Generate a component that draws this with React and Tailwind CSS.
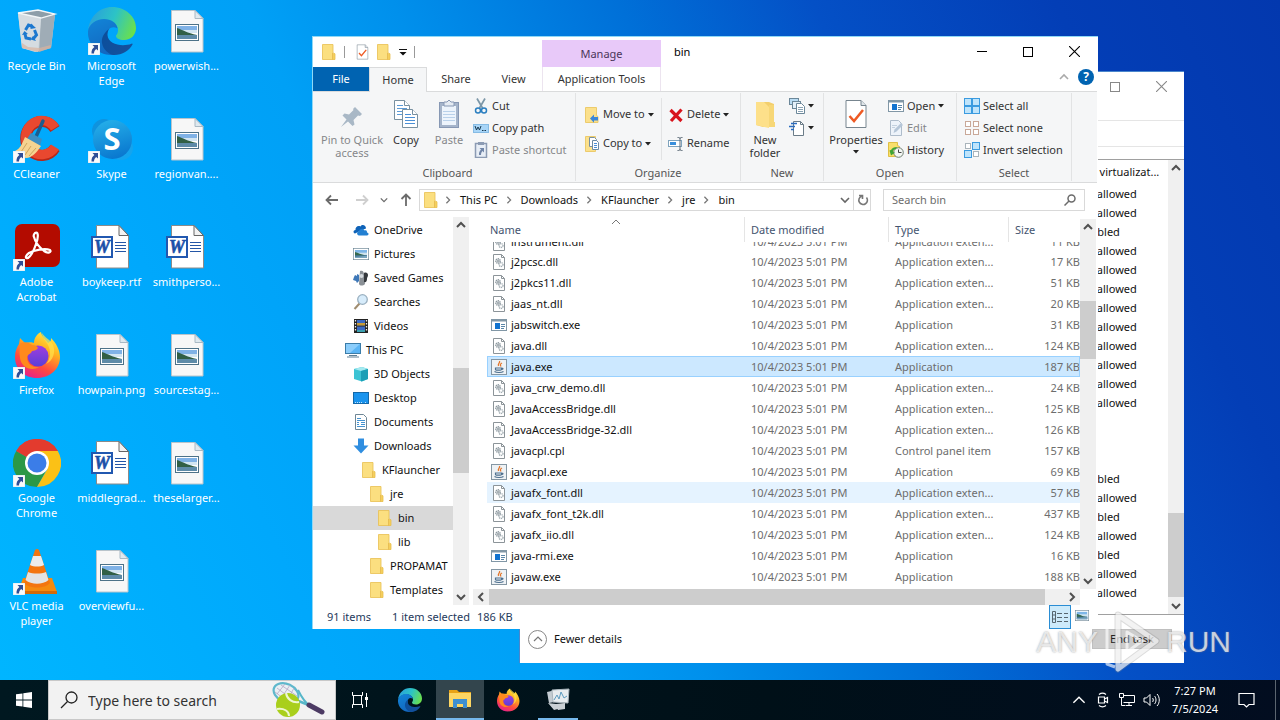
import { Fragment } from 'react';

/* ---------- Shared glyphs ---------- */

function Chevron({ dir = 'down', size = 'size-[10px]', className = '', width = 1.6 }) {
  const paths = {
    down: 'M1 3l4 4 4-4',
    up: 'M1 7l4-4 4 4',
    left: 'M7 1L3 5l4 4',
    right: 'M3 1l4 4-4 4',
  };
  return (
    <svg viewBox="0 0 10 10" className={`shrink-0 ${size} ${className}`} fill="none" stroke="currentColor" strokeWidth={width}>
      <path d={paths[dir]} />
    </svg>
  );
}

function Caret() {
  return (
    <svg viewBox="0 0 6 4" className="h-1 w-[6px] shrink-0" fill="#222">
      <path d="M0 0h6L3 3.5z" />
    </svg>
  );
}

function FolderIcon({ className = 'size-4' }) {
  return (
    <svg viewBox="0 0 16 16" className={`shrink-0 ${className}`}>
      <path d="M1.5.5h10.5v9l2 .5v5.5H1.5z" fill="#fbdf80" />
      <path d="M12 9.500h2v6h-2z" fill="#f5cf5c" />
      <path d="M1.500 .5h10.500v8.500l2 .8v5.700H1.500z" fill="none" stroke="#e8bf50" strokeWidth=".8" />
      <path d="M11.500 9v6.500" stroke="#e0b040" strokeWidth=".7" />
    </svg>
  );
}

function LargeFolderIcon() {
  return (
    <svg viewBox="0 0 22 28" className="h-7 w-[22px]">
      <path d="M2 1h13l5 2v18l1 1v4H9L2 24z" fill="#f3cf6d" />
      <path d="M2 1h8l5 5v21L2 24z" fill="#fde08a" />
      <path d="M15 4h5v17h1v5h-6z" fill="#f7d777" />
    </svg>
  );
}

function LandscapeIcon({ className = 'h-3 w-4' }) {
  return (
    <svg viewBox="0 0 24 18" className={`shrink-0 ${className}`} preserveAspectRatio="none">
      <rect x=".5" y=".5" width="23" height="17" fill="#fff" stroke="#6a8494" />
      <path d="M3 3h18v12H3z" fill="#7db6e8" />
      <path d="M3 7h18v4H3z" fill="#cfe3ee" />
      <path d="M3 6c5 1 9 4 15 5l3 .5H3z" fill="#35694e" />
      <path d="M3 11h18v4H3z" fill="#3c6f8f" />
      <path d="M3 13c8 0 12-1 18-1v3H3z" fill="#79a5bd" />
    </svg>
  );
}

function ShortcutArrow() {
  return (
    <svg viewBox="0 0 12 12" className="absolute bottom-0 left-0 size-3">
      <rect width="12" height="12" fill="#fafafa" stroke="#b9d7ea" strokeWidth=".5" />
      <path d="M4.500 2H10v5.500L8.200 5.900C6.700 7 6 8.400 6 10.500H3.500C3.300 7.500 4.400 5.300 6.400 4z" fill="#2f4e96" />
    </svg>
  );
}

/* ---------- Desktop icons ---------- */

function RecycleIcon() {
  return (
    <svg viewBox="0 0 48 48" className="size-12">
      <path d="M5 6l20-3 17 4-4 34-16 4-13-4z" fill="#c9d2d8" />
      <path d="M5 6l20-3 17 4-14 4z" fill="#8d9ea9" />
      <path d="M28 11l14-4-4 34-12 4z" fill="#9facb6" />
      <path d="M5 6l23 5-3 34-16-4z" fill="#d5dce1" />
      <path d="M5 6l20-3 17 4-14 4z" fill="none" stroke="#f2f6f8" strokeWidth="1.300" />
      <path d="M9 36l6 4 11 1 12-3-.5 3L25 45 9 41z" fill="#d9b3a0" opacity=".7" />
      <g fill="none" stroke="#1c78cf" strokeWidth="3">
        <path d="M12.500 23l3-5 4 1.500" />
        <path d="M21.500 23l2 5-3 3.500" />
        <path d="M18 32l-5-1-1-4" />
      </g>
      <path d="M18 16.500l5 4.500-5.500 1zM23 34l-5.500-1.500L20 29zM9 28l2.500-4 3.500 3z" fill="#1c78cf" />
    </svg>
  );
}

function EdgeIcon({ className = 'size-12' }) {
  return (
    <svg viewBox="0 0 48 48" className={className}>
      <defs>
        <linearGradient id="edgeTop" x1="0" y1=".3" x2="1" y2=".6">
          <stop offset="0" stopColor="#2a9fdc" />
          <stop offset=".5" stopColor="#2cc3c6" />
          <stop offset="1" stopColor="#6be04c" />
        </linearGradient>
        <linearGradient id="edgeLeft" x1="0" y1="0" x2=".4" y2="1">
          <stop offset="0" stopColor="#1285d8" />
          <stop offset="1" stopColor="#1268c0" />
        </linearGradient>
        <linearGradient id="edgeBottom" x1="0" y1=".4" x2="1" y2=".6">
          <stop offset="0" stopColor="#0c4f9c" />
          <stop offset="1" stopColor="#16509c" />
        </linearGradient>
      </defs>
      <path d="M0 23C2 9 12 0 24 0c14 0 24 10 24 21 0 7-5 12-12 12-5 0-8-2-8-4 0-1 2-2 2-6 0-6-6-10-13-10C9 13 2 17 0 23z" fill="url(#edgeTop)" />
      <path d="M0 24c1-7 8-12 16-12 7 0 13 4 13.500 9.500C24 18 19 22 19 28c0 9 7 16 15 17-4 2-8 3-11 3C9 48-1 36 0 24z" fill="url(#edgeLeft)" />
      <path d="M21 22c-4 3-8 8-7 14 1 7 7 11 11 11.900 9 .4 16-4 19.500-10.400.4-.8-.3-1.200-1-.8C35 40 20 38 19.500 28c0-2.500.5-4.500 1.500-6z" fill="url(#edgeBottom)" />
    </svg>
  );
}

function CCleanerIcon() {
  return (
    <svg viewBox="0 0 48 48" className="size-12">
      <path d="M42 14A16 17 0 1 0 42 33" fill="none" stroke="#b92717" strokeWidth="11" />
      <path d="M42 13A16 17 0 1 0 42 32" fill="none" stroke="#e9482f" strokeWidth="9.500" />
      <path d="M30 6L22 24" stroke="#1c5c8e" strokeWidth="3.500" strokeLinecap="round" />
      <path d="M18 18l11 6-2 7-13-7z" fill="#3b8fc4" />
      <path d="M12 22l16 9c-4 6-9 12-15 12-5-1-9-3-11-7 5-2 7-7 10-14z" fill="#f5d491" />
      <path d="M14 28l-6 9M18 31l-6 9M23 33l-7 8" stroke="#cfa35c" strokeWidth="1" />
    </svg>
  );
}

function SkypeIcon() {
  return (
    <svg viewBox="0 0 48 48" className="size-12">
      <defs>
        <linearGradient id="skypeFace" x1=".2" y1="0" x2=".5" y2="1">
          <stop offset="0" stopColor="#25b0ea" />
          <stop offset="1" stopColor="#0a78cf" />
        </linearGradient>
      </defs>
      <circle cx="16" cy="16" r="12" fill="#0f93de" />
      <circle cx="33" cy="33" r="12" fill="#14a4ee" />
      <circle cx="24.500" cy="24.500" r="19.500" fill="url(#skypeFace)" />
      <text x="24" y="35" textAnchor="middle" fontSize="31" fontWeight="700" fill="#fff" fontFamily="Open Sans, sans-serif">S</text>
    </svg>
  );
}

function AcrobatIcon() {
  return (
    <svg viewBox="0 0 48 48" className="size-12">
      <rect x="2" y="1" width="45" height="43" rx="7" fill="#b30b00" />
      <path
        d="M22 10c3-2 4 3 1 11-2 6-5 12-8 14-3 1-3-2 1-5 5-3 16-5 21-3 2 2-2 4-6 1-5-4-9-10-10-14-1-2 0-3 1-4z"
        fill="none" stroke="#fff" strokeWidth="2.200"
      />
    </svg>
  );
}

function FirefoxIcon({ className = 'size-12' }) {
  return (
    <svg viewBox="0 0 48 48" className={className}>
      <defs>
        <linearGradient id="foxBody" x1=".8" y1="0" x2=".3" y2="1">
          <stop offset="0" stopColor="#fff04a" />
          <stop offset=".35" stopColor="#ffb21f" />
          <stop offset=".7" stopColor="#ff4b3e" />
          <stop offset="1" stopColor="#e5208c" />
        </linearGradient>
        <linearGradient id="foxGlobe" x1=".5" y1="0" x2=".5" y2="1">
          <stop offset="0" stopColor="#a03de0" />
          <stop offset="1" stopColor="#5a3fd6" />
        </linearGradient>
      </defs>
      <path d="M28 1c1 5 4 7 7 11 3-1 3-3 3-5 5 5 9 12 9 19 0 12-10 21-23 21S2 38 2 26c0-6 2-10 4-13l1-6 5 5c3-1 7-1 9 0 0-5 3-9 7-11z" fill="url(#foxBody)" />
      <circle cx="25" cy="25" r="10.500" fill="url(#foxGlobe)" />
      <path d="M7 13c3-3 9-2 12 1 3 0 5 1 6 3-1 2-4 3-6 3-1 3-4 3-5 6 0 7 6 11 12 10-8 5-18 0-19-9-1-5 0-10 0-14z" fill="#ff8a1c" />
      <path d="M29 2c0 5 4 8 6 12 3 6 3 14-2 19 7-3 10-12 7-19-2-5-8-7-11-12z" fill="#ffe04a" opacity=".75" />
    </svg>
  );
}

function ChromeIcon() {
  return (
    <svg viewBox="0 0 48 48" className="size-12">
      <path d="M24 24L3.200 12A24 24 0 0 1 44.800 12z" fill="#e33b2e" />
      <path d="M24 24L3.200 12A24 24 0 0 0 24 48L34 30z" fill="#2b9847" />
      <path d="M24 24l10.400 6L24 48A24 24 0 0 0 44.800 12H24z" fill="#fbc116" />
      <path d="M3.200 12L24 24V12h20.800A24 24 0 0 0 3.200 12z" fill="#e33b2e" />
      <circle cx="24" cy="24" r="12" fill="#fff" />
      <circle cx="24" cy="24" r="9.500" fill="#3b7de8" />
    </svg>
  );
}

function VlcIcon() {
  return (
    <svg viewBox="0 0 48 48" className="size-12">
      <path d="M10 31h29l5 14H5z" fill="#f58a0f" />
      <path d="M5 44h39v3H5z" fill="#d46a08" />
      <path d="M22 3q2-2 4 0l11 33c-5 6-21 6-26 0z" fill="#f3750f" />
      <path d="M20 9h8l3 9c-4 2-10 2-14 0z" fill="#ececec" />
      <path d="M15 25c5 2 13 2 18 0l2.500 8c-6 5-17 5-23 0z" fill="#e3e3e3" />
    </svg>
  );
}

function ImageFileIcon() {
  return (
    <svg viewBox="0 0 48 48" className="size-12">
      <path d="M8.500 3.500H32l8 8V45H8.500z" fill="#f7f7f7" stroke="#b9c4cb" />
      <path d="M32 3.500v8h8z" fill="#dfe9ef" stroke="#a9b9c4" />
      <rect x="12.500" y="17.500" width="23" height="16" fill="#fff" stroke="#4d7288" />
      <path d="M14 19h20v6H14z" fill="#80b2e6" />
      <path d="M14 23h20v3H14z" fill="#d3e6f2" />
      <path d="M14 21c6 2 10 5 20 7H14z" fill="#315f45" />
      <path d="M14 28h20v4H14z" fill="#5e8ba8" />
    </svg>
  );
}

function WordFileIcon() {
  return (
    <svg viewBox="0 0 48 48" className="size-12">
      <path d="M8.500 2.500H31l9.500 10V45h-32z" fill="#fff" stroke="#8a8a8a" />
      <path d="M31 2.500v10h9.500z" fill="#f2f2f2" stroke="#666" />
      <path d="M27 19.500h11M27 22.500h11M27 25.500h11M27 28.500h11" stroke="#2456a6" />
      <path d="M4 14h20v20H4z" fill="#fff" stroke="#2158b0" strokeWidth="2" />
      <text x="14" y="30" textAnchor="middle" fontSize="18" fontWeight="700" fontStyle="italic" fill="#1b50a8" stroke="#1b50a8" strokeWidth=".6" fontFamily="Liberation Serif, serif">W</text>
    </svg>
  );
}

const desktopItems = [
  { label: 'Recycle Bin', icon: RecycleIcon },
  { label: 'CCleaner', icon: CCleanerIcon, shortcut: true },
  { label: 'Adobe Acrobat', icon: AcrobatIcon, shortcut: true },
  { label: 'Firefox', icon: FirefoxIcon, shortcut: true },
  { label: 'Google Chrome', icon: ChromeIcon, shortcut: true },
  { label: 'VLC media player', icon: VlcIcon, shortcut: true },
  { label: 'Microsoft Edge', icon: EdgeIcon, shortcut: true },
  { label: 'Skype', icon: SkypeIcon, shortcut: true },
  { label: 'boykeep.rtf', icon: WordFileIcon },
  { label: 'howpain.png', icon: ImageFileIcon },
  { label: 'middlegrad...', icon: WordFileIcon },
  { label: 'overviewfu...', icon: ImageFileIcon },
  { label: 'powerwish...', icon: ImageFileIcon },
  { label: 'regionvan....', icon: ImageFileIcon },
  { label: 'smithperso...', icon: WordFileIcon },
  { label: 'sourcestag...', icon: ImageFileIcon },
  { label: 'theselarger...', icon: ImageFileIcon },
];

function DesktopIcons() {
  return (
    <div className="-ml-px grid w-fit grid-flow-col auto-cols-[75px] grid-rows-[repeat(6,108px)]">
      {desktopItems.map(({ label, icon: Icon, shortcut }) => (
        <button key={label} type="button" className="flex flex-col items-center pt-[7px]">
          <span className="relative block">
            <Icon />
            {shortcut && <ShortcutArrow />}
          </span>
          <span className="mt-[3px] px-1 text-[11px] leading-[15px] text-white">{label}</span>
        </button>
      ))}
    </div>
  );
}

/* ---------- Scroll bars ---------- */

function VScroll({ before, thumb, after }) {
  return (
    <div className="flex w-4 shrink-0 flex-col items-center bg-[#f0f0f0] text-[#505050]">
      <span className="flex h-4 items-center"><Chevron dir="up" width={2} /></span>
      <span className={before} />
      <span className={`w-full bg-[#cdcdcd] ${thumb}`} />
      <span className={after} />
      <span className="flex h-4 items-center"><Chevron dir="down" width={2} /></span>
    </div>
  );
}

/* ---------- Ribbon icons ---------- */

function PinIcon() {
  return (
    <svg viewBox="0 0 24 24" className="size-6" fill="#a9b8c6">
      <path d="M15 2l7 7-2 2-2-.5-4.500 4.500 1 4.500-2 1.500-4.500-4.500L1 22l5.500-7.500L2.500 10.500l2-2 4.500 1L13.500 5 13 4z" />
    </svg>
  );
}

function CopyIcon() {
  return (
    <svg viewBox="0 0 26 30" className="h-[30px] w-[26px]" fill="#fff" stroke="#7890a0">
      <path d="M1.500 1.500h10l5 5v14h-15z" />
      <path d="M11.500 1.500v5h5" />
      <path d="M4 6.500h6M4 9.500h10M4 12.500h10M4 15.500h10" stroke="#5b9bd8" />
      <path d="M9.500 10.500h10l5 5v13h-15z" />
      <path d="M19.500 10.500v5h5" />
      <path d="M12 15.500h6M12 18.500h10M12 21.500h10M12 24.500h10" stroke="#4a8fd6" />
    </svg>
  );
}

function PasteIcon() {
  return (
    <svg viewBox="0 0 22 30" className="h-[30px] w-[22px]">
      <rect x="1.500" y="3.500" width="19" height="25" fill="#a5b4ca" stroke="#8798b4" />
      <rect x="4" y="7" width="14" height="19" fill="#edf4fc" />
      <path d="M5 12.500h12M5 15.500h12M5 18.500h12M5 21.500h12" stroke="#b9d1ea" />
      <path d="M6 7V3h3l2-2 2 2h3v4z" fill="#e5ebf3" stroke="#8798b4" />
    </svg>
  );
}

function CutIcon() {
  return (
    <svg viewBox="0 0 16 16" className="size-4" fill="none">
      <path d="M4 .5l5.500 9.500M12 .5L6.500 10" stroke="#7c97a8" strokeWidth="1.700" />
      <circle cx="5" cy="12.500" r="2.500" stroke="#2b7fc0" strokeWidth="1.500" />
      <circle cx="11" cy="12.500" r="2.500" stroke="#2b7fc0" strokeWidth="1.500" />
    </svg>
  );
}

function CopyPathIcon() {
  return (
    <svg viewBox="0 0 16 16" className="size-4">
      <rect x=".5" y="4.500" width="15" height="8" fill="#a8d5f7" stroke="#86bbe4" />
      <path d="M2 6l1.500 4L5 7l1.500 3L8 6" fill="none" stroke="#17384f" />
      <path d="M9 10.500h1.500M11.500 10.500H13" stroke="#17384f" />
    </svg>
  );
}

function PasteShortcutIcon() {
  return (
    <svg viewBox="0 0 16 16" className="size-4">
      <rect x="2.500" y="1.500" width="11" height="14" fill="#e8eef6" stroke="#8c9bb3" strokeWidth="1.500" />
      <path d="M5 0h6v3H5z" fill="#8c9bb3" />
      <path d="M6.500 6h4.500v4.500l-1.500-1.500c-1 1-1.500 2-1.500 4H6c-.2-2.500.5-4 2-5.500z" fill="#7186a8" />
    </svg>
  );
}

function MoveToIcon() {
  return (
    <svg viewBox="0 0 16 16" className="size-4">
      <path d="M1.500.5h11v8l1.500 1v6H1.500z" fill="#fbe08c" stroke="#eccb6c" />
      <path d="M6 11.500l4-4V10h4v3.500h-4v2.300z" fill="#3a86d8" />
    </svg>
  );
}

function CopyToIcon() {
  return (
    <svg viewBox="0 0 16 16" className="size-4">
      <path d="M1.500.5h10v15h-10z" fill="#fbe08c" stroke="#eccb6c" />
      <path d="M5.500 1.500h5l2 2v7h-7z" fill="#fff" stroke="#7890a0" />
      <path d="M8.500 4.500h4l2 2v7h-6z" fill="#fff" stroke="#6b8ba4" />
      <path d="M10 7.500h3M10 9.500h3M10 11.500h3" stroke="#4a8fd6" />
    </svg>
  );
}

function DeleteIcon() {
  return (
    <svg viewBox="0 0 16 16" className="size-4" stroke="#d8141c" strokeWidth="3.200">
      <path d="M2.500 3l11 11M13.500 2.500L3 14" />
    </svg>
  );
}

function RenameIcon() {
  return (
    <svg viewBox="0 0 16 16" className="size-4" fill="none">
      <rect x=".5" y="4.500" width="13" height="6" fill="#fff" stroke="#7fa3bd" />
      <path d="M2 6h6v3H2z" fill="#3a8fdc" />
      <path d="M9.500 1.500c2 0 2.500 0 2.500 1.500v10c0 1.500-.5 1.500-2.500 1.500M14.500 1.500C12.500 1.500 12 1.500 12 3M12 13c0 1.500.5 1.500 2.500 1.500" stroke="#5d6b78" />
    </svg>
  );
}

function NewItemIcon() {
  return (
    <svg viewBox="0 0 16 16" className="size-4" fill="#fff" stroke="#6b8799">
      <rect x=".5" y=".5" width="9" height="6" fill="#b9dcf4" />
      <rect x="3.500" y="3.500" width="8" height="7" fill="#e3f0fa" />
      <path d="M7.500 5.500h5l3 3v7h-8z" />
      <path d="M9 9.500h5M9 11.500h5M9 13.500h5" stroke="#8aa3b4" />
    </svg>
  );
}

function EasyAccessIcon() {
  return (
    <svg viewBox="0 0 16 16" className="size-4" fill="#fff" stroke="#6b7c88">
      <path d="M4.500 1.500h7l3 3v11h-10z" />
      <path d="M11.500 1.500v3h3" fill="none" />
      <path d="M2 3.500h6M0 6.500h6M2 9.500h3" stroke="#2b6cc0" strokeWidth="1.300" />
    </svg>
  );
}

function CheckDocIcon({ className = 'h-[30px] w-[22px]' }) {
  return (
    <svg viewBox="0 0 22 30" className={className}>
      <path d="M1 1.500h15l5 5v22H1z" fill="#fff" stroke="#77858f" />
      <path d="M16 1.500v5h5" fill="#dfe5e9" stroke="#77858f" />
      <path d="M4.500 17l4.500 5 9-11" fill="none" stroke="#ee5a24" strokeWidth="2.500" />
    </svg>
  );
}

function AppIcon() {
  return (
    <svg viewBox="0 0 16 16" className="size-4">
      <rect x=".5" y="2.500" width="15" height="11" fill="#fff" stroke="#8197a6" />
      <path d="M1 3h14v1.500H1z" fill="#8197a6" />
      <path d="M4 6h5v6H4z" fill="#1273cf" />
      <path d="M10 7.500h4M10 9.500h4M10 11.500h3" stroke="#5a86a8" />
    </svg>
  );
}

function EditIcon() {
  return (
    <svg viewBox="0 0 16 16" className="size-4">
      <path d="M2.500.5h8l3 3v12h-11z" fill="#edf3fa" stroke="#aebccb" />
      <path d="M5.500 13l1-3.500L13 3l2 2-6.500 6.500z" fill="#b5c6d8" />
      <path d="M4 5.500h5M4 7.500h3" stroke="#c3d1df" />
    </svg>
  );
}

function HistoryIcon() {
  return (
    <svg viewBox="0 0 16 16" className="size-4">
      <path d="M.5.5h9v3l2 1v10H.5z" fill="#f9e06b" stroke="#dfbf45" />
      <circle cx="10.500" cy="10.500" r="4.800" fill="#f3f6f3" stroke="#6f7f72" />
      <path d="M10.500 7.500v3h3" fill="none" stroke="#444" />
      <path d="M3 8c1-2 3-3 6-3l-1 2c-2 0-3 1-3 3l2 .5-4 3-1.500-5z" fill="#3fa535" />
    </svg>
  );
}

function SelectIcon({ filled, strokes }) {
  const cells = [[0.5, 0.5], [8.5, 0.5], [0.5, 8.5], [8.5, 8.5]];
  return (
    <svg viewBox="0 0 16 16" className="size-4">
      {cells.map(([x, y], i) => (
        <rect
          key={i}
          x={filled[i] ? x : x + 1}
          y={filled[i] ? y : y + 1}
          width={filled[i] ? 7 : 5}
          height={filled[i] ? 7 : 5}
          fill={filled[i] ? '#bfe4fb' : '#fff'}
          stroke={filled[i] ? '#3b9be0' : strokes}
        />
      ))}
    </svg>
  );
}

/* ---------- Ribbon ---------- */

function SmallAction({ icon, label, name, caret, muted }) {
  return (
    <button type="button" aria-label={name} className={`flex h-[22px] items-center gap-[3px] whitespace-nowrap ${muted ? 'text-[#85878a]' : 'text-[#333]'}`}>
      {icon}
      {label && <span>{label}</span>}
      {caret && <Caret />}
    </button>
  );
}

function LargeAction({ icon, lines, muted, caret, className }) {
  return (
    <button type="button" className={`flex flex-col items-center leading-[13px] ${className} ${muted ? 'text-[#85878a]' : 'text-[#333]'}`}>
      <span className="flex h-10 items-end pb-1">{icon}</span>
      {lines.map((line) => (
        <span key={line} className="whitespace-nowrap">{line}</span>
      ))}
      {caret && <span className="mt-1"><Caret /></span>}
    </button>
  );
}

function RibbonGroup({ title, className, children }) {
  return (
    <section className={`my-px flex flex-col border-r border-[#e2e3e4] ${className}`}>
      <div className="flex flex-1">{children}</div>
      <h2 className="text-center leading-4 text-[#555]">{title}</h2>
    </section>
  );
}

function Ribbon() {
  return (
    <div className="flex h-[92px] shrink-0 border-y border-[#dadbdc] bg-[#f5f6f7]">
      <RibbonGroup title="Clipboard" className="w-[263px] pl-[7px]">
        <LargeAction className="w-[64px]" icon={<PinIcon />} lines={['Pin to Quick', 'access']} muted />
        <LargeAction className="w-[44px]" icon={<CopyIcon />} lines={['Copy']} />
        <LargeAction className="w-[42px]" icon={<PasteIcon />} lines={['Paste']} muted />
        <div className="flex flex-col pt-[2px] pl-[3px]">
          <SmallAction icon={<CutIcon />} label="Cut" />
          <SmallAction icon={<CopyPathIcon />} label="Copy path" />
          <SmallAction icon={<PasteShortcutIcon />} label="Paste shortcut" muted />
        </div>
      </RibbonGroup>
      <RibbonGroup title="Organize" className="w-[165px]">
        <div className="my-[5px] flex w-[86px] flex-col justify-center gap-[7px] border-r border-[#e2e3e4] pl-[8px]">
          <SmallAction icon={<MoveToIcon />} label="Move to" caret />
          <SmallAction icon={<CopyToIcon />} label="Copy to" caret />
        </div>
        <div className="flex flex-col justify-center gap-[7px] pl-[6px]">
          <SmallAction icon={<DeleteIcon />} label="Delete" caret />
          <SmallAction icon={<RenameIcon />} label="Rename" />
        </div>
      </RibbonGroup>
      <RibbonGroup title="New" className="w-[83px]">
        <LargeAction className="w-12" icon={<LargeFolderIcon />} lines={['New', 'folder']} />
        <div className="flex flex-col pt-[2px]">
          <SmallAction icon={<NewItemIcon />} name="New item" caret />
          <SmallAction icon={<EasyAccessIcon />} name="Easy access" caret />
        </div>
      </RibbonGroup>
      <RibbonGroup title="Open" className="w-[133px]">
        <LargeAction className="w-16" icon={<CheckDocIcon />} lines={['Properties']} caret />
        <div className="flex flex-col pt-[2px]">
          <SmallAction icon={<AppIcon />} label="Open" caret />
          <SmallAction icon={<EditIcon />} label="Edit" muted />
          <SmallAction icon={<HistoryIcon />} label="History" />
        </div>
      </RibbonGroup>
      <RibbonGroup title="Select" className="w-[115px]">
        <div className="flex flex-col pt-[2px] pl-[7px]">
          <SmallAction icon={<SelectIcon filled={[1, 1, 1, 1]} />} label="Select all" />
          <SmallAction icon={<SelectIcon filled={[0, 0, 0, 0]} strokes="#c9a898" />} label="Select none" />
          <SmallAction icon={<SelectIcon filled={[0, 1, 1, 0]} strokes="#a9b4bb" />} label="Invert selection" />
        </div>
      </RibbonGroup>
    </div>
  );
}

/* ---------- Explorer title, tabs and address bar ---------- */

function WindowButtons({ minimize, tone }) {
  return (
    <div className={`flex ${tone}`}>
      {minimize && (
        <button type="button" aria-label="Minimize" className="flex h-[29px] w-[46px] items-center justify-center">
          <span className="h-px w-[10px] bg-current" />
        </button>
      )}
      <button type="button" aria-label="Maximize" className="flex h-[29px] w-[46px] items-center justify-center">
        <span className="size-[10px] border border-current" />
      </button>
      <button type="button" aria-label="Close" className="flex h-[29px] w-[46px] items-center justify-center">
        <svg viewBox="0 0 10 10" className="size-[11px]" stroke="currentColor"><path d="M0 0l10 10M10 0L0 10" /></svg>
      </button>
    </div>
  );
}

function TitleBar() {
  return (
    <header className="flex h-[30px] shrink-0">
      <div className="flex w-[229px] items-center gap-[7px] pl-2">
        <FolderIcon />
        <span className="h-3 w-px bg-[#999]" />
        <CheckDocIcon className="ml-1 h-4 w-[13px]" />
        <FolderIcon />
        <svg viewBox="0 0 8 8" className="size-2" fill="#111"><path d="M0 1h8v1H0zM0.500 4h7L4 7.500z" /></svg>
        <span className="h-3 w-px bg-[#999]" />
      </div>
      <div className="mt-[3px] w-[119px] bg-[#e8c9f9] pt-[2px] text-center leading-6 text-[#4b3558]">Manage</div>
      <h1 className="flex-1 pl-[13px] leading-[30px] text-black">bin</h1>
      <WindowButtons minimize tone="text-black" />
    </header>
  );
}

function Tabs() {
  return (
    <nav className="flex h-6 shrink-0 text-center leading-6 text-[#333]">
      <button type="button" className="w-14 bg-[#0063b1] text-white">File</button>
      <button type="button" className="relative -mb-px w-[58px] border-x border-t border-[#dadbdc] bg-[#f5f6f7] pb-px leading-[22px]">Home</button>
      <button type="button" className="w-[58px]">Share</button>
      <button type="button" className="w-[57px]">View</button>
      <button type="button" className="w-[119px] border-x border-[#ece4ef]">Application Tools</button>
      <span className="flex-1" />
      <span className="flex items-center gap-[9px] pr-[3px] pb-1 text-[#aaa]">
        <Chevron dir="up" />
        <button type="button" aria-label="Help" className="size-4 rounded-full bg-[#0063b1] text-[12px] leading-4 font-bold text-white">?</button>
      </span>
    </nav>
  );
}

const crumbs = ['This PC', 'Downloads', 'KFlauncher', 'jre', 'bin'];

function ArrowIcon({ className = '', d }) {
  return (
    <svg viewBox="0 0 14 14" className={`size-[14px] ${className}`} fill="none" stroke="currentColor" strokeWidth="1.800">
      <path d={d} />
    </svg>
  );
}

function AddressBar() {
  return (
    <div className="flex h-[34px] shrink-0 items-center pr-3">
      <div className="flex w-[106px] items-center pl-3 text-[#6b6b6b]">
        <ArrowIcon d="M13 7H1.500M6 2.500L1.500 7 6 11.500" />
        <ArrowIcon className="ml-4 text-[#cfcfcf]" d="M1 7h11.500M8 2.500L12.500 7 8 11.500" />
        <Chevron className="mx-[11px]" size="size-2" />
        <ArrowIcon d="M7 13V1.500M2.500 6L7 1.500 11.500 6" />
      </div>
      <div className="flex h-[22px] flex-1 items-center border border-[#d9d9d9] pl-[3px] text-[#111]">
        <FolderIcon />
        {crumbs.map((crumb) => (
          <Fragment key={crumb}>
            <Chevron dir="right" className="mr-[6px] ml-[5px] text-[#777]" size="size-2" />
            <span className="px-[2px] whitespace-nowrap">{crumb}</span>
          </Fragment>
        ))}
        <span className="flex-1" />
        <Chevron className="text-[#666]" />
        <span className="mx-[2px] ml-[3px] h-full w-px bg-[#d9d9d9]" />
        <svg viewBox="0 0 14 14" className="size-[14px]" fill="none" stroke="#777" strokeWidth="1.600">
          <path d="M10.500 4.500a4.300 4.300 0 1 1-5-1.300M3 2.500h3.500V6" />
        </svg>
      </div>
      <label className="ml-3 flex h-[22px] w-[202px] items-center border border-[#d9d9d9] px-2">
        <input type="search" aria-label="Search bin" placeholder="Search bin" className="min-w-0 flex-1 bg-transparent outline-none placeholder:text-[#6d6d6d]" />
        <svg viewBox="0 0 12 12" className="size-3" fill="none" stroke="#6b6b6b" strokeWidth="1.500">
          <circle cx="7.500" cy="4.500" r="3.500" />
          <path d="M5 7l-4.500 4.500" />
        </svg>
      </label>
    </div>
  );
}

/* ---------- Navigation pane ---------- */

const navSvg = 'size-4 shrink-0';

const navIcons = {
  oneDrive: (
    <svg viewBox="0 0 16 16" className={navSvg}>
      <path d="M2 11.500C0 11 0 8 2.500 8 2 5 5 3 7.500 4.500 9 2 13 3 13 6.500L9 8z" fill="#0f63b8" />
      <path d="M6 13.500c-2.500-.5-2.500-4 0-4C6.500 6 10.500 6 11.500 8.500c2-.5 2.500.5 2.500 2 2 .2 2 2.800 0 3z" fill="#2380d2" />
    </svg>
  ),
  pictures: <LandscapeIcon />,
  savedGames: (
    <svg viewBox="0 0 16 16" className={navSvg}>
      <path d="M7 1c3-1 4 1 4 4l1 9c-2 2-5 2-6 0z" fill="#8a9096" />
      <path d="M11 3c2-1 4 0 4 2s-1 2-1 4-1 4-3 3z" fill="#34383c" />
      <path d="M2 5l2 1V4l2 1v6l-2 2-1-2-3-1 1-3z" fill="#3f78b8" />
      <circle cx="8.500" cy="6" r="2" fill="#d5dade" />
    </svg>
  ),
  searches: (
    <svg viewBox="0 0 16 16" className={navSvg} fill="none">
      <path d="M6.500 9.500L1.500 15" stroke="#a08d70" strokeWidth="2" />
      <circle cx="9.500" cy="5.500" r="4.800" fill="#d7ecfb" stroke="#9ab0c0" strokeWidth="1.300" />
    </svg>
  ),
  videos: (
    <svg viewBox="0 0 16 16" className={navSvg}>
      <path d="M1 1h14v14H1z" fill="#222" />
      <path d="M4 2h8v5.500H4z" fill="#3a69c4" />
      <path d="M4 5h8v2.500H4z" fill="#c79a35" />
      <path d="M4 8.500h8V14H4z" fill="#3a69c4" />
      <path d="M4 12h8v2H4z" fill="#3ba0b0" />
      <path d="M2.500 2v12M13.500 2v12" stroke="#eee" strokeWidth="1.300" strokeDasharray="1.500 1.500" />
    </svg>
  ),
  pc: (
    <svg viewBox="0 0 16 16" className={navSvg}>
      <rect x=".5" y="1.500" width="15" height="10" fill="#5bb5f5" stroke="#3b7ca8" />
      <path d="M1 2h14L5 11H1z" fill="#8bcdfb" />
      <path d="M4 13.500h8M2 15h12" stroke="#5e7f94" />
    </svg>
  ),
  objects: (
    <svg viewBox="0 0 16 16" className={navSvg}>
      <path d="M1 3l8-2 6 2v10l-6 2.500L1 13z" fill="#3cc3d4" />
      <path d="M1 3l8-2 6 2-7 2z" fill="#a5eaf0" />
      <path d="M8 5l7-2v10l-7 2.500z" fill="#1c9fb6" />
    </svg>
  ),
  desktop: (
    <svg viewBox="0 0 16 16" className={navSvg}>
      <rect x=".5" y="2.500" width="15" height="11" fill="#1a94ee" stroke="#1468a8" />
      <path d="M2 12.500h8M12 12.500h2" stroke="#bfe2fb" strokeDasharray="1 1" />
    </svg>
  ),
  documents: (
    <svg viewBox="0 0 16 16" className={navSvg}>
      <path d="M2.500.5h8l3 3v12h-11z" fill="#fff" stroke="#6e8796" />
      <path d="M4 4.500h4M4 6.500h8M4 8.500h2M8 8.500h4M4 10.500h2M8 10.500h4M4 12.500h8" stroke="#4593d0" />
    </svg>
  ),
  downloads: (
    <svg viewBox="0 0 16 16" className={navSvg} fill="#2f8ee0">
      <path d="M5 .5h6v7h4.500L8 15.500.5 7.500H5z" />
    </svg>
  ),
  folder: <FolderIcon />,
};

const navItems = [
  { label: 'OneDrive', icon: 'oneDrive', indent: 'pl-10' },
  { label: 'Pictures', icon: 'pictures', indent: 'pl-10' },
  { label: 'Saved Games', icon: 'savedGames', indent: 'pl-10' },
  { label: 'Searches', icon: 'searches', indent: 'pl-10' },
  { label: 'Videos', icon: 'videos', indent: 'pl-10' },
  { label: 'This PC', icon: 'pc', indent: 'pl-8' },
  { label: '3D Objects', icon: 'objects', indent: 'pl-10' },
  { label: 'Desktop', icon: 'desktop', indent: 'pl-10' },
  { label: 'Documents', icon: 'documents', indent: 'pl-10' },
  { label: 'Downloads', icon: 'downloads', indent: 'pl-10' },
  { label: 'KFlauncher', icon: 'folder', indent: 'pl-12' },
  { label: 'jre', icon: 'folder', indent: 'pl-14' },
  { label: 'bin', icon: 'folder', indent: 'pl-16', active: true },
  { label: 'lib', icon: 'folder', indent: 'pl-16' },
  { label: 'PROPAMAT', icon: 'folder', indent: 'pl-14' },
  { label: 'Templates', icon: 'folder', indent: 'pl-14' },
];

function NavPane() {
  return (
    <aside className="flex shrink-0">
      <ul className="w-[140px] overflow-hidden pt-px text-[#111]">
        {navItems.map(({ label, icon, indent, active }) => (
          <li key={label} className={`flex h-6 items-center gap-[5px] whitespace-nowrap ${indent} ${active ? 'bg-[#d9d9d9]' : ''}`}>
            {navIcons[icon]}
            <span>{label}</span>
          </li>
        ))}
      </ul>
      <VScroll before="flex-[135]" thumb="flex-[104]" after="flex-[116]" />
    </aside>
  );
}

/* ---------- File list ---------- */

function DllIcon() {
  return (
    <svg viewBox="0 0 16 16" className="size-4 shrink-0" fill="none">
      <path d="M2.500.5h8l3 3v12h-11z" fill="#fff" stroke="#8c9499" />
      <path d="M10.500.5v3h3" stroke="#8c9499" />
      <circle cx="7" cy="7" r="2.200" stroke="#8b979e" strokeWidth="1.400" strokeDasharray="1.200 .6" />
      <circle cx="7" cy="7" r="1" stroke="#8b979e" />
      <circle cx="10" cy="10.500" r="2" stroke="#a2adb3" strokeWidth="1.400" strokeDasharray="1.200 .6" />
    </svg>
  );
}

function JavaIcon() {
  return (
    <svg viewBox="0 0 16 16" className="size-4 shrink-0" fill="none">
      <rect x=".5" y=".5" width="15" height="15" fill="#eef2f5" stroke="#8496a3" />
      <path d="M8.500 2c1 2-2 2.500-1 5M11 4c-2 1-2 2-1 3.500" stroke="#e3762b" strokeWidth="1.300" />
      <path d="M4.500 9h6v1.500c0 1-6 1-6 0zM10.500 9c2 0 2 1.500 0 1.500M3.500 12.500c2 1.300 7 1.300 9 0" stroke="#4c6f8e" strokeWidth="1.200" />
    </svg>
  );
}

const fileIcons = { dll: DllIcon, exe: AppIcon, java: JavaIcon };
const EXT = 'Application exten...';

const files = [
  { name: 'j2pcsc.dll', icon: 'dll', type: EXT, size: '17 KB' },
  { name: 'j2pkcs11.dll', icon: 'dll', type: EXT, size: '51 KB' },
  { name: 'jaas_nt.dll', icon: 'dll', type: EXT, size: '20 KB' },
  { name: 'jabswitch.exe', icon: 'exe', type: 'Application', size: '31 KB' },
  { name: 'java.dll', icon: 'dll', type: EXT, size: '124 KB' },
  { name: 'java.exe', icon: 'java', type: 'Application', size: '187 KB', state: 'selected' },
  { name: 'java_crw_demo.dll', icon: 'dll', type: EXT, size: '24 KB' },
  { name: 'JavaAccessBridge.dll', icon: 'dll', type: EXT, size: '125 KB' },
  { name: 'JavaAccessBridge-32.dll', icon: 'dll', type: EXT, size: '126 KB' },
  { name: 'javacpl.cpl', icon: 'dll', type: 'Control panel item', size: '157 KB' },
  { name: 'javacpl.exe', icon: 'java', type: 'Application', size: '69 KB' },
  { name: 'javafx_font.dll', icon: 'dll', type: EXT, size: '57 KB', state: 'hover' },
  { name: 'javafx_font_t2k.dll', icon: 'dll', type: EXT, size: '437 KB' },
  { name: 'javafx_iio.dll', icon: 'dll', type: EXT, size: '124 KB' },
  { name: 'java-rmi.exe', icon: 'exe', type: 'Application', size: '16 KB' },
  { name: 'javaw.exe', icon: 'java', type: 'Application', size: '188 KB' },
];

const rowStates = {
  selected: 'bg-[#cce8ff] outline outline-1 -outline-offset-1 outline-[#99d1ff]',
  hover: 'bg-[#e5f3ff]',
};

const clipped = 'flex h-[9px] items-end overflow-hidden leading-[19px]';

function FileTable() {
  return (
    <table className="w-full table-fixed border-collapse text-left text-[#6d6d6d]">
      <colgroup>
        <col />
        <col className="w-36" />
        <col className="w-[120px]" />
        <col className="w-[72px]" />
      </colgroup>
      <thead>
        <tr className="h-[25px] text-[#44546f] [&>th]:p-0 [&>th]:font-normal">
          <th className="relative">
            <span className="block pl-[3px] leading-[25px]">Name</span>
            <Chevron dir="up" className="absolute top-0 left-1/2 -translate-x-1/2 text-[#777]" width={1} />
          </th>
          <th><span className="block border-l border-[#e5e5e5] pl-[6px] leading-[25px]">Date modified</span></th>
          <th><span className="block border-l border-[#e5e5e5] pl-[6px] leading-[25px]">Type</span></th>
          <th><span className="block border-l border-[#e5e5e5] pl-[6px] leading-[25px]">Size</span></th>
        </tr>
      </thead>
      <tbody className="[&_td]:p-0 [&_td]:whitespace-nowrap">
        <tr>
          <td>
            <div className={`${clipped} gap-1 pl-1 text-[#111]`}>
              <DllIcon />
              <span>instrument.dll</span>
            </div>
          </td>
          <td><div className={`${clipped} pl-[7px]`}>10/4/2023 5:01 PM</div></td>
          <td><div className={`${clipped} pl-[7px]`}>{EXT}</div></td>
          <td><div className={`${clipped} justify-end`}>11 KB</div></td>
        </tr>
        {files.map(({ name, icon, type, size, state }) => {
          const Icon = fileIcons[icon];
          return (
            <tr key={name} className={`h-[21px] leading-4 [&>td]:pt-px ${state ? rowStates[state] : ''}`}>
              <td>
                <div className="flex items-center gap-1 pl-1 text-[#111]">
                  <Icon />
                  <span>{name}</span>
                </div>
              </td>
              <td><span className="pl-[7px]">10/4/2023 5:01 PM</span></td>
              <td><span className="pl-[7px]">{type}</span></td>
              <td className="text-right">{size}</td>
            </tr>
          );
        })}
      </tbody>
    </table>
  );
}

function FileList() {
  return (
    <main className="flex min-w-0 flex-1 pr-px pl-1">
      <div className="flex min-w-0 flex-1 flex-col">
        <div className="min-h-0 flex-1 overflow-hidden pl-[14px]">
          <FileTable />
        </div>
        <div className="flex h-4 shrink-0 items-center bg-[#f0f0f0] text-[#505050]">
          <span className="flex w-4 justify-center"><Chevron dir="left" width={2} /></span>
          <span className="h-full flex-[556] bg-[#cdcdcd]" />
          <span className="flex-[19]" />
          <span className="flex w-4 justify-center"><Chevron dir="right" width={2} /></span>
        </div>
      </div>
      <div className="flex pt-[2px] pb-4">
        <VScroll before="flex-[66]" thumb="flex-[58]" after="flex-[213]" />
      </div>
    </main>
  );
}

function StatusBar() {
  return (
    <footer className="flex h-6 shrink-0 items-center pr-2 pl-[14px] text-[#1e395b]">
      <span className="w-[65px]">91 items</span>
      <span className="w-[85px] whitespace-nowrap">1 item selected</span>
      <span>186 KB</span>
      <span className="flex-1" />
      <button type="button" aria-label="Details view" className="flex h-6 w-[22px] items-center justify-center border border-[#2a8dd4] bg-[#cdeafa]">
        <svg viewBox="0 0 18 14" className="h-[14px] w-[18px]" fill="none" stroke="#57656e">
          <path d="M1.500 1.500h3v11h-3zM1.500 5h3M1.500 9h3" />
          <path d="M6 3.500h5M13 3.500h4M6 7.500h5M13 7.500h4M6 11.500h5M13 11.500h4" />
        </svg>
      </button>
      <button type="button" aria-label="Thumbnail view" className="ml-1 pb-1">
        <LandscapeIcon className="h-[11px] w-[14px]" />
      </button>
    </footer>
  );
}

function ExplorerWindow() {
  return (
    <div className="absolute top-9 right-[182px] bottom-[91px] left-[312px] flex flex-col border-t border-l border-[#8fd8f5] bg-white pr-px">
      <TitleBar />
      <Tabs />
      <Ribbon />
      <AddressBar />
      <div className="flex min-h-0 flex-1">
        <NavPane />
        <FileList />
      </div>
      <StatusBar />
    </div>
  );
}

/* ---------- Task Manager ---------- */

const NOT = 'Not allowed';
const DIS = 'Disabled';
const uacRows = [NOT, NOT, DIS, NOT, NOT, NOT, NOT, NOT, NOT, NOT, NOT, NOT, '', '', '', DIS, NOT, DIS, NOT, DIS, NOT, NOT];

function TaskManagerWindow() {
  return (
    <div className="absolute top-[71px] right-24 bottom-[57px] left-[519px] flex flex-col border-t border-l border-[#4a86cc] bg-white">
      <div className="flex h-[49px] shrink-0 justify-end border-b border-[#e5e5e5]">
        <WindowButtons tone="text-[#888]" />
      </div>
      <div className="h-[26px] shrink-0 border-b border-[#e5e5e5]" />
      <div className="mt-3 flex min-h-0 flex-1 border-y border-[#a0a0a0]">
        <div className="flex flex-1 justify-end overflow-hidden">
          <ul className="w-[93px] leading-[19px] text-[#111]">
            <li className="h-6 pt-[2px] whitespace-nowrap">UAC virtualizat...</li>
            {uacRows.map((row, i) => (
              <li key={i} className="h-[19px]">{row}</li>
            ))}
          </ul>
        </div>
        <VScroll before="flex-[337]" thumb="flex-[84]" after="flex-[1]" />
      </div>
      <div className="flex h-12 shrink-0 items-center justify-between pr-3 pl-2">
        <button type="button" className="flex items-center gap-[7px] text-[#111]">
          <span className="flex size-[19px] items-center justify-center rounded-full border border-[#888] text-[#777]">
            <Chevron dir="up" width={1.2} />
          </span>
          Fewer details
        </button>
        <button type="button" className="h-5 w-20 border border-[#bfbfbf] bg-[#cccccc] text-[#222]">End task</button>
      </div>
    </div>
  );
}

/* ---------- Watermark ---------- */

function Watermark() {
  return (
    <div className="pointer-events-none absolute right-[49px] bottom-[46px] flex items-center gap-1 font-['Liberation_Sans_Narrow','Liberation_Sans',sans-serif] text-[30px] leading-[64px] text-white/70 [text-shadow:0_0_2px_rgba(130,130,130,0.8)]">
      <span>ANY</span>
      <svg viewBox="0 0 60 64" className="h-16 w-[60px]" fill="none" strokeLinejoin="round">
        <path d="M16 5l38 26-38 28z" stroke="#8c8c8c" strokeOpacity=".3" strokeWidth="7" />
        <path d="M16 5l38 26-38 28z" stroke="#fff" strokeOpacity=".65" strokeWidth="5" />
        <path d="M5 12v42l8 3M25 22v20l15-11z" stroke="#fff" strokeOpacity=".65" strokeWidth="3" />
      </svg>
      <span>RUN</span>
    </div>
  );
}

/* ---------- Taskbar ---------- */

function TennisIcon() {
  return (
    <svg viewBox="0 0 54 36" className="h-9 w-[54px]" fill="none">
      <path d="M24 18c5 2 10 4 15 6" stroke="#57b7c9" strokeWidth="2.500" />
      <path d="M26 8c3 6 6 12 12 16" stroke="#57b7c9" strokeWidth="2" />
      <ellipse cx="14" cy="11" rx="13" ry="9" transform="rotate(25 14 11)" fill="#eaf0f3" stroke="#5fb8cc" strokeWidth="2.200" />
      <path d="M5 6l16 12M9 3l16 11M3 10l12 9M5 12L13 2M10 15l8-12M16 17l6-11" stroke="#b5a6c4" strokeWidth=".8" />
      <path d="M37 23l13 7" stroke="#4c3a63" strokeWidth="5" strokeLinecap="round" />
      <circle cx="16" cy="23" r="12" fill="#a9cf1c" />
      <path d="M5 27c7-1 12 2 12 7M14 11c1 6 6 10 13 9" stroke="#eef7cf" strokeWidth="2" />
    </svg>
  );
}

function TaskViewIcon() {
  return (
    <svg viewBox="0 0 18 16" className="h-4 w-[18px]" fill="none" stroke="#fff">
      <path d="M1.500 0v3.500h10V0M1.500 16v-3.500h10V16M2.500 3.500v9M10.500 3.500v9M15.500 1v14" />
      <path d="M14 5h3v3h-3z" fill="#fff" stroke="none" />
    </svg>
  );
}

function ExplorerIcon() {
  return (
    <svg viewBox="0 0 24 24" className="size-6">
      <path d="M1 3h8l2 2h12v4H1z" fill="#e8a317" />
      <path d="M1 6h22v14H1z" fill="#fdd663" />
      <path d="M5 12h14v9h-4v-4H9v4H5z" fill="#3d8fd1" />
    </svg>
  );
}

function MonitorIcon() {
  return (
    <svg viewBox="0 0 24 24" className="size-6">
      <path d="M1 5l13-3v12L3 16z" fill="#c3ccd2" />
      <path d="M6 3l17-1-1 14-15-1z" fill="#e8edf0" stroke="#aab5bc" />
      <path d="M8 13l3-5 2 4 2-7 3 6 3-2" fill="none" stroke="#5d9cc0" />
      <path d="M10 17l9-1v6l-7 1zM2 16l8 1 2 5-4 1z" fill="#c9d0d5" />
    </svg>
  );
}

function TaskButton({ label, width = 'w-12', className = '', children }) {
  return (
    <button type="button" aria-label={label} className={`flex h-10 items-center justify-center ${width} ${className}`}>
      {children}
    </button>
  );
}

function Taskbar() {
  return (
    <footer className="relative flex h-10 shrink-0 bg-[linear-gradient(90deg,#001820,#001018_60%,#020d20)] text-white">
      <TaskButton label="Start">
        <svg viewBox="0 0 16 16" className="size-4" fill="#fff">
          <path d="M0 2.300L6.500 1.400v6.200H0zM7.300 1.300L16 0v7.600H7.300zM0 8.400h6.500v6.200L0 13.700zM7.300 8.400H16V16l-8.700-1.200z" />
        </svg>
      </TaskButton>
      <label className="flex w-72 items-center border border-[#c8c8c8] bg-[#f2f2f2] pr-[9px] pl-[11px]">
        <svg viewBox="0 0 18 18" className="size-[18px]" fill="none" stroke="#222" strokeWidth="1.300">
          <circle cx="11.500" cy="6.500" r="5.500" />
          <path d="M7.500 10.500L1 17" />
        </svg>
        <input type="text" aria-label="Search" placeholder="Type here to search" className="ml-[10px] min-w-0 flex-1 bg-transparent text-[14px] outline-none placeholder:text-[#333]" />
        <TennisIcon />
      </label>
      <TaskButton label="Task View"><TaskViewIcon /></TaskButton>
      <TaskButton label="Edge" width="w-[52px]"><EdgeIcon className="size-6" /></TaskButton>
      <TaskButton label="File Explorer" className="border-b-2 border-[#76b9ed] bg-[#33454d]"><ExplorerIcon /></TaskButton>
      <TaskButton label="Firefox"><FirefoxIcon className="size-6" /></TaskButton>
      <TaskButton label="Task Manager" width="w-10" className="ml-[6px] border-b-2 border-[#76b9ed]"><MonitorIcon /></TaskButton>
      <span className="flex-1" />
      <div className="flex items-center gap-2">
        <Chevron dir="up" className="mx-px" size="size-[14px]" width={1} />
        <svg viewBox="0 0 16 16" className="size-4" fill="none" stroke="#fff" strokeWidth="1.200">
          <path d="M3.500 5h6v6h-6zM9.500 7l3-1.500v5l-3-1.500M4 2.500c2-1.500 5-1.500 7 0M4 13.500c2 1.500 5 1.500 7 0" />
        </svg>
        <svg viewBox="0 0 16 16" className="size-4" fill="none" stroke="#fff">
          <path d="M4.500 3.500h11v7h-11M.5 1.500h4v4h-4zM2.500 5.500v8h4M10 10.500v3M7 13.500h6" />
        </svg>
        <svg viewBox="0 0 18 16" className="h-4 w-[18px]" fill="none" stroke="#fff">
          <path d="M1 6h2.500l3.500-3.500v11L3.500 10H1zM9.500 6c1 1 1 3 0 4M11.500 4c2 2 2 6 0 8M14 2c3 3 3 9 0 12" />
        </svg>
      </div>
      <div className="flex w-[68px] flex-col justify-center text-center text-[11px] leading-[18px]">
        <time>7:27 PM</time>
        <time>7/5/2024</time>
      </div>
      <button type="button" aria-label="Notifications" className="ml-[9px] flex w-[37px] items-center">
        <svg viewBox="0 0 17 17" className="size-[17px]" fill="none" stroke="#fff" strokeWidth="1.200">
          <path d="M1 1.500h15v11h-5L8.500 15 6 12.500H1z" />
        </svg>
      </button>
      <span className="mr-1 w-px bg-[#5b6570]" />
    </footer>
  );
}

export default function App() {
  return (
    <div className="relative flex min-h-screen flex-col overflow-hidden bg-[linear-gradient(65deg,#00b6ff_0%,#00a8fc_22%,#00a0f6_36%,#0090ec_45%,#0070d8_59%,#0450c6_71%,#033eb6_86%,#0338ae_100%)] font-['Noto_Sans','Open_Sans',sans-serif] text-[11px]">
      <div className="flex-1">
        <DesktopIcons />
      </div>
      <TaskManagerWindow />
      <ExplorerWindow />
      <Watermark />
      <Taskbar />
    </div>
  );
}
